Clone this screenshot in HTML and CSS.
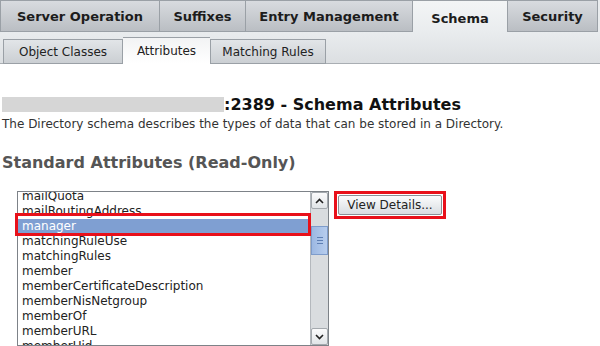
FILE: index.html
```html
<!DOCTYPE html>
<html lang="en">
    <head>
        <meta charset="UTF-8" />
        <title>Schema Attributes</title>
        <link rel="stylesheet" href="styles.css">
    </head>
    <body>
        <div class="main-tabs">
            <div class="tab" style="width: 160px">Server Operation</div>
            <div class="tab" style="width: 86px">Suffixes</div>
            <div class="tab" style="width: 167px">Entry Management</div>
            <div class="tab selected" style="width: 95px">Schema</div>
            <div class="tab" style="width: 90px">Security</div>
        </div>
        <div class="sub-band">
            <div class="sub-tab" style="width: 120px">Object Classes</div>
            <div class="sub-tab selected" style="width: 87px">Attributes</div>
            <div class="sub-tab" style="width: 116px">Matching Rules</div>
        </div>

        <div class="content">
            <h1 class="page-title"><span class="host-mask"></span>:2389 - Schema Attributes</h1>
            <p class="intro">The Directory schema describes the types of data that can be stored in a Directory.</p>
            <h2 class="section-title">Standard Attributes (Read-Only)</h2>

            <div class="picker">
                <div class="listbox">
                    <div class="items">
                        <div class="item">mailQuota</div>
                        <div class="item">mailRoutingAddress</div>
                        <div class="item active">manager</div>
                        <div class="item">matchingRuleUse</div>
                        <div class="item">matchingRules</div>
                        <div class="item">member</div>
                        <div class="item">memberCertificateDescription</div>
                        <div class="item">memberNisNetgroup</div>
                        <div class="item">memberOf</div>
                        <div class="item">memberURL</div>
                        <div class="item">memberUid</div>
                    </div>
                    <div class="scrollbar">
                        <div class="arrow">
                            <svg width="9" height="6" viewBox="0 0 9 6"><path d="M1 5 L4.5 1.5 L8 5" fill="none" stroke="#222" stroke-width="1.6"/></svg>
                        </div>
                        <div class="track">
                            <div class="thumb"><span></span><span></span><span></span></div>
                        </div>
                        <div class="arrow">
                            <svg width="9" height="6" viewBox="0 0 9 6"><path d="M1 1 L4.5 4.5 L8 1" fill="none" stroke="#222" stroke-width="1.6"/></svg>
                        </div>
                    </div>
                    <div class="mark-row"></div>
                </div>
                <div class="button-mark">
                    <button class="details-btn">View Details...</button>
                </div>
            </div>
        </div>
    </body>
</html>
```

FILE: styles.css
```css
body {
    margin: 0;
    font-family: 'DejaVu Sans', sans-serif;
    background: #fff;
    color: #222;
    overflow: hidden;
}

.main-tabs {
    display: flex;
    height: 32px;
    background: #e9ecee;
}

.tab {
    box-sizing: border-box;
    height: 32px;
    display: flex;
    align-items: center;
    justify-content: center;
    font-size: 13px;
    font-weight: bold;
    color: #1c1c1c;
    background: linear-gradient(#d8dbdf, #babec3);
    border: 1px solid #9aa0a6;
    border-left: none;
}

.tab:first-child {
    border-left: 1px solid #9aa0a6;
}

.tab.selected {
    background: linear-gradient(#f3f5f6, #e9ecee);
    border-bottom: none;
    padding-top: 3px;
}

.sub-band {
    box-sizing: border-box;
    height: 32px;
    display: flex;
    align-items: flex-end;
    padding-left: 3px;
    background: linear-gradient(#e9ecee, #dcdfe2);
    border-bottom: 1px solid #a9aeb3;
}

.sub-tab {
    box-sizing: border-box;
    height: 25px;
    margin-bottom: -1px;
    display: flex;
    align-items: center;
    justify-content: center;
    font-size: 12px;
    color: #222;
    background: linear-gradient(#e2e5e8, #cbcfd3);
    border: 1px solid #9aa0a6;
}

.sub-tab.selected {
    height: 27px;
    background: linear-gradient(#f2f3f4, #fff);
    border-bottom: 1px solid #fff;
    border-left: none;
    border-right: none;
}

.content {
    padding: 0 2px;
}

.page-title {
    display: flex;
    align-items: center;
    margin: 31px 0 0;
    height: 18px;
    font-size: 16px;
    color: #111;
}

.host-mask {
    width: 222px;
    height: 15px;
    background: #d6d6d6;
}

.intro {
    margin: 4px 0 0;
    font-size: 12px;
    color: #333;
}

.section-title {
    margin: 22px 0 0;
    font-size: 16px;
    color: #555;
}

.picker {
    display: flex;
    align-items: flex-start;
    margin: 19px 0 0 15px;
}

.listbox {
    position: relative;
    box-sizing: border-box;
    width: 312px;
    height: 155px;
    display: flex;
    border: 1px solid #7d8288;
    background: #fff;
}

.items {
    flex: 1;
    overflow: hidden;
}

.item {
    height: 15px;
    line-height: 15px;
    padding-left: 4px;
    font-size: 12px;
    color: #222;
    white-space: nowrap;
}

.item:first-child {
    margin-top: -3px;
}

.item.active {
    background: #7f9fd2;
    color: #fff;
}

.mark-row {
    position: absolute;
    left: -3px;
    top: 21px;
    width: 290px;
    height: 17px;
    border: 3px solid #e8101a;
}

.scrollbar {
    width: 17px;
    display: flex;
    flex-direction: column;
    border-left: 1px solid #b4b8bd;
    background: #d9dcdf;
}

.arrow {
    height: 15px;
    display: flex;
    align-items: center;
    justify-content: center;
    background: linear-gradient(#fbfbfc, #e1e4e7);
    border: 1px solid #a4a9ae;
    border-radius: 2px;
}

.track {
    flex: 1;
    padding-top: 17px;
}

.thumb {
    box-sizing: border-box;
    height: 29px;
    display: flex;
    flex-direction: column;
    align-items: center;
    justify-content: center;
    gap: 2px;
    background: linear-gradient(90deg, #9cb8e2, #b7cdee);
    border: 1px solid #7e9ccb;
}

.thumb span {
    width: 6px;
    height: 1px;
    background: #5e7fb4;
}

.button-mark {
    margin: 0 0 0 5px;
    padding: 1px;
    border: 3px solid #e8101a;
}

.details-btn {
    display: block;
    width: 104px;
    height: 20px;
    padding: 0;
    font-family: 'DejaVu Sans', sans-serif;
    font-size: 12px;
    color: #222;
    background: linear-gradient(#fbfcfd, #d9dde1);
    border: 1px solid #8b9096;
    border-radius: 2px;
}
```
